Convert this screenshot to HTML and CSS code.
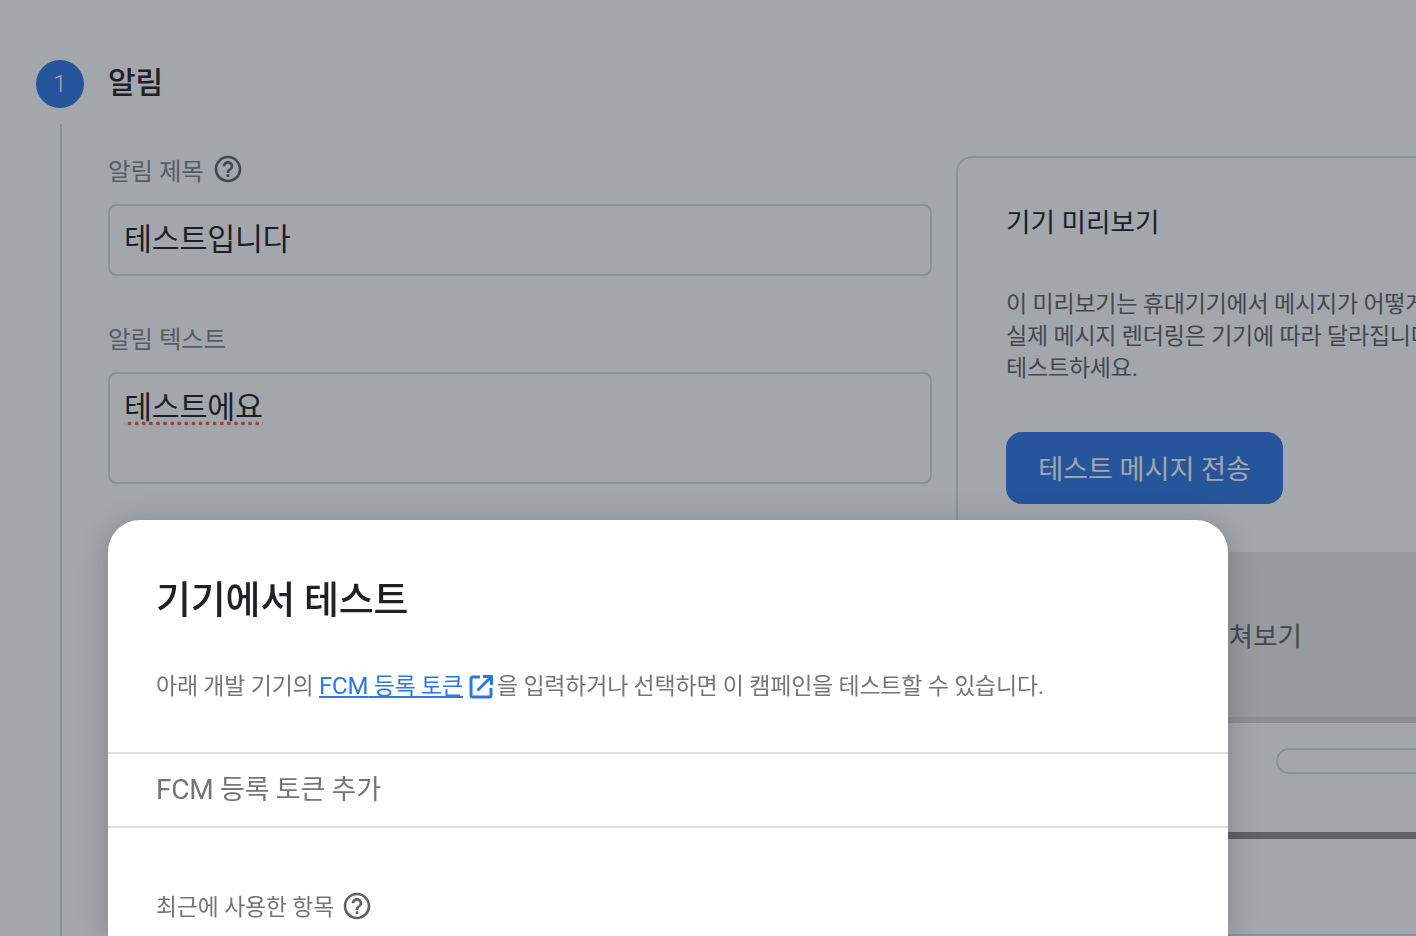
FILE: index.html
```html
<!DOCTYPE html>
<html lang="ko">
<head>
    <meta charset="UTF-8">
    <meta name="viewport" content="width=device-width, initial-scale=1.0">
    <title>기기에서 테스트</title>
    <link rel="stylesheet" href="styles.css">
</head>
<body>
    <div class="page">
        <div class="step-head">
            <div class="step-num">1</div>
            <h2 class="step-title">알림</h2>
        </div>
        <div class="step-body">
            <div class="form-col">
                <div class="field-label">알림 제목
                    <svg class="help" viewBox="0 0 24 24"><path d="M11 18h2v-2h-2v2zm1-16C6.48 2 2 6.48 2 12s4.48 10 10 10 10-4.48 10-10S17.52 2 12 2zm0 18c-4.41 0-8-3.59-8-8s3.59-8 8-8 8 3.59 8 8-3.59 8-8 8zm0-14c-2.21 0-4 1.79-4 4h2c0-1.1.9-2 2-2s2 .9 2 2c0 2-3 1.75-3 5h2c0-2.25 3-2.5 3-5 0-2.21-1.79-4-4-4z"/></svg>
                </div>
                <div class="input-box title-box">테스트입니다</div>
                <div class="field-label second">알림 텍스트</div>
                <div class="input-box text-box"><span class="spell">테스트에요</span></div>
            </div>
            <div class="preview-card">
                <h3 class="preview-title">기기 미리보기</h3>
                <p class="preview-desc">이 미리보기는 휴대기기에서 메시지가 어떻게 표시되는지 보여줍니다.<br>실제 메시지 렌더링은 기기에 따라 달라집니다. 실제 기기에서<br>테스트하세요.</p>
                <button class="send-btn">테스트 메시지 전송</button>
                <div class="preview-strip">
                    <div class="strip-title">펼쳐보기</div>
                    <div class="phone">
                        <div class="phone-pill"></div>
                    </div>
                </div>
            </div>
        </div>
    </div>

    <div class="overlay"></div>

    <div class="dialog">
        <h1 class="dialog-title">기기에서 테스트</h1>
        <p class="dialog-desc">아래 개발 기기의 <a class="dialog-link" href="#"><span class="latin">FCM</span> 등록 토큰</a>
            <svg class="ext" viewBox="0 0 26 26"><path d="M12 3H4.500A1.500 1.500 0 0 0 3 4.500v17A1.500 1.500 0 0 0 4.500 23h17a1.500 1.500 0 0 0 1.500-1.500V14M9.500 16.500 23 3M15 2.500h8.500V11"/></svg>을 입력하거나 선택하면 이 캠페인을 테스트할 수 있습니다.</p>
        <div class="token-row"><span><span class="latin token-latin">FCM</span> 등록 토큰 추가</span></div>
        <div class="recent">최근에 사용한 항목
            <svg class="help" viewBox="0 0 24 24"><path d="M11 18h2v-2h-2v2zm1-16C6.48 2 2 6.48 2 12s4.48 10 10 10 10-4.48 10-10S17.52 2 12 2zm0 18c-4.41 0-8-3.59-8-8s3.59-8 8-8 8 3.59 8 8-3.59 8-8 8zm0-14c-2.21 0-4 1.79-4 4h2c0-1.1.9-2 2-2s2 .9 2 2c0 2-3 1.75-3 5h2c0-2.25 3-2.5 3-5 0-2.21-1.79-4-4-4z"/></svg>
        </div>
    </div>
</body>
</html>
```

FILE: styles.css
```css
* {
    margin: 0;
    padding: 0;
    box-sizing: border-box;
}

html, body {
    height: 100%;
}

body {
    font-family: Roboto, "Noto Sans CJK KR", sans-serif;
    background: #fff;
    color: #202124;
    overflow: hidden;
}

.latin {
    font-size: 24px;
}

.page {
    height: 936px;
    padding: 60px 0 0 36px;
    overflow: hidden;
}

.step-head {
    display: flex;
    align-items: center;
    gap: 24px;
    height: 48px;
}

.step-num {
    width: 48px;
    height: 48px;
    border-radius: 50%;
    background: #2f78e4;
    color: #fff;
    font-size: 24px;
    font-weight: 300;
    display: flex;
    align-items: center;
    justify-content: center;
}

.step-title {
    font-size: 30px;
    font-weight: 500;
    position: relative;
    top: -4px;
}

.step-body {
    display: flex;
    margin: 16px 0 0 24px;
    padding-left: 46px;
    border-left: 2px solid #dadce0;
    gap: 24px;
    height: 812px;
}

.form-col {
    width: 824px;
    flex: none;
    padding-top: 29px;
}

.field-label {
    display: flex;
    align-items: center;
    gap: 8px;
    height: 32px;
    font-size: 24.4px;
    color: #80868b;
}

.field-label.second {
    margin-top: 45px;
}

.help {
    width: 32px;
    height: 32px;
    fill: #5f6368;
    flex: none;
}

.input-box {
    margin-top: 19px;
    border: 2px solid #dadce0;
    border-radius: 8px;
    padding: 14px 14px;
    font-size: 30.4px;
    line-height: 40px;
    letter-spacing: -0.2px;
}

.title-box {
    height: 72px;
}

.text-box {
    height: 112px;
}

.spell {
    display: inline-block;
    background: radial-gradient(circle, #ff5a4a 1.7px, transparent 2.2px) 2px calc(100% - 2px) / 7.1px 5px repeat-x;
}

.preview-card {
    width: 600px;
    flex: none;
    margin-top: 32px;
    border: 2px solid #dadce0;
    border-radius: 16px;
    padding: 47px 0 0 48px;
    overflow: hidden;
    white-space: nowrap;
}

.preview-title {
    font-size: 26.6px;
    font-weight: 400;
    line-height: 36px;
}

.preview-desc {
    margin-top: 48px;
    font-size: 23px;
    line-height: 32px;
    letter-spacing: -0.2px;
    color: #5f6368;
}

.send-btn {
    display: block;
    margin-top: 47px;
    width: 277px;
    height: 72px;
    border: none;
    border-radius: 16px;
    padding-bottom: 3px;
    background: #2f78e4;
    color: #fff;
    font: inherit;
    font-size: 27.2px;
    letter-spacing: -0.1px;
}

.preview-strip {
    margin: 48px 0 0 -48px;
    height: 287px;
    background: #ecebe9;
    padding: 67px 0 0 0;
}

.strip-title {
    margin-left: 246px;
    font-size: 26.6px;
    line-height: 36px;
    color: #5f6368;
}

.phone {
    margin: 62px 0 0 0;
    height: 122px;
    background: #fff;
    border-top: 6px solid #d8d8d8;
    border-bottom: 7px solid #8c8c8c;
    padding: 25px 0 0 318px;
}

.phone-pill {
    height: 26px;
    border: 2px solid #dadce0;
    border-radius: 13px;
}

.overlay {
    position: fixed;
    inset: 0;
    background: rgba(26, 32, 46, 0.4);
}

.dialog {
    position: fixed;
    left: 108px;
    top: 520px;
    width: 1120px;
    height: 416px;
    background: #fff;
    border-radius: 32px 32px 0 0;
    box-shadow: 0 4px 30px rgba(0, 0, 0, 0.22);
}

.dialog-title {
    padding: 54px 48px 0;
    font-size: 38px;
    font-weight: 500;
    line-height: 52px;
    letter-spacing: -0.25px;
    color: #202124;
}

.dialog-desc {
    display: flex;
    align-items: center;
    padding: 0 48px;
    margin-top: 40px;
    height: 36px;
    font-size: 23px;
    letter-spacing: -0.22px;
    color: #757575;
    white-space: pre;
}

.dialog-link {
    color: #2a78e4;
}

.ext {
    width: 26px;
    height: 26px;
    fill: none;
    stroke: #2a78e4;
    stroke-width: 3;
    flex: none;
    margin: 5px 3px 0 5px;
}

.token-row {
    margin-top: 50px;
    height: 76px;
    padding: 0 48px 6px;
    border-top: 2px solid #e0e0e0;
    border-bottom: 2px solid #e0e0e0;
    font-size: 27px;
    letter-spacing: -0.2px;
    color: #757575;
    display: flex;
    align-items: center;
}

.token-latin {
    font-size: 28px;
}

.recent {
    display: flex;
    align-items: center;
    gap: 7px;
    margin-top: 61px;
    padding: 0 48px;
    font-size: 22.8px;
    letter-spacing: -0.1px;
    color: #757575;
}

.recent .help {
    fill: #616161;
}
```
